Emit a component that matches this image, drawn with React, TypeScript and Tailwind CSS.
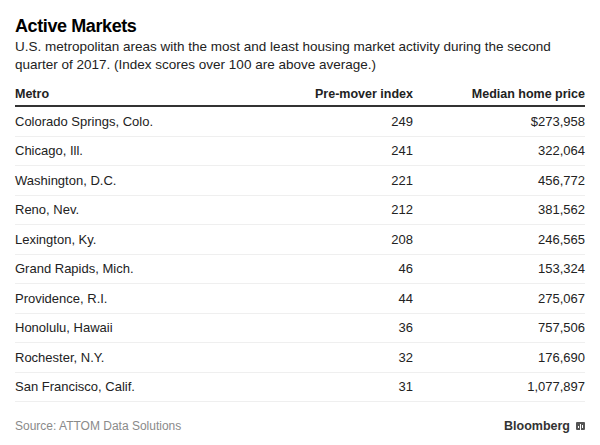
// Active Markets table card

const rows = [
  { metro: 'Colorado Springs, Colo.', index: '249', price: '$273,958' },
  { metro: 'Chicago, Ill.', index: '241', price: '322,064' },
  { metro: 'Washington, D.C.', index: '221', price: '456,772' },
  { metro: 'Reno, Nev.', index: '212', price: '381,562' },
  { metro: 'Lexington, Ky.', index: '208', price: '246,565' },
  { metro: 'Grand Rapids, Mich.', index: '46', price: '153,324' },
  { metro: 'Providence, R.I.', index: '44', price: '275,067' },
  { metro: 'Honolulu, Hawaii', index: '36', price: '757,506' },
  { metro: 'Rochester, N.Y.', index: '32', price: '176,690' },
  { metro: 'San Francisco, Calif.', index: '31', price: '1,077,897' },
];

export default function App() {
  return (
    <div className="w-[600px] h-[445px] bg-white px-[15px] pt-[15px] text-[#1a1a1a] font-['Liberation_Sans',Arial,sans-serif]">
      {/* タイトル */}
      <h1 className="text-[18px] leading-[22px] font-bold tracking-[-0.4px] text-black">Active Markets</h1>
      <p className="mt-[1px] text-[13.5px] leading-[18px] text-[#222]">
        U.S. metropolitan areas with the most and least housing market activity during the second quarter of 2017. (Index scores over 100 are above average.)
      </p>

      {/* テーブル */}
      <div className="mt-[12px] grid grid-cols-[1fr_110px_172px]">
        <div className="h-[19px] text-[12.5px] font-bold leading-[16px] text-[#222]">Metro</div>
        <div className="h-[19px] text-[12.5px] font-bold leading-[16px] text-right text-[#222]">Pre-mover index</div>
        <div className="h-[19px] text-[12.5px] font-bold leading-[16px] text-right text-[#222]">Median home price</div>
        <div className="col-span-3 h-[2px] bg-[#333]" />
        {rows.map(r => (
          <div key={r.metro} className="col-span-3 grid grid-cols-[1fr_110px_172px] h-[29.5px] items-center border-b border-[#efefef] text-[13px] text-[#222]">
            <div>{r.metro}</div>
            <div className="text-right">{r.index}</div>
            <div className="text-right">{r.price}</div>
          </div>
        ))}
      </div>

      {/* フッター */}
      <div className="mt-[15px] flex items-center justify-between">
        <span className="text-[12px] text-[#8a8a8a]">Source: ATTOM Data Solutions</span>
        <span className="flex items-center gap-[6px] text-[12.5px] font-bold text-[#333]">
          Bloomberg
          <svg width="9" height="9" viewBox="0 0 9 9">
            <rect x="0" y="0" width="9" height="8" rx="1" fill="#555" />
            <rect x="4" y="2" width="1" height="7" fill="#fff" />
            <rect x="2" y="4" width="1" height="2" fill="#fff" />
            <rect x="6" y="3" width="1" height="3" fill="#fff" />
          </svg>
        </span>
      </div>
    </div>
  );
}
